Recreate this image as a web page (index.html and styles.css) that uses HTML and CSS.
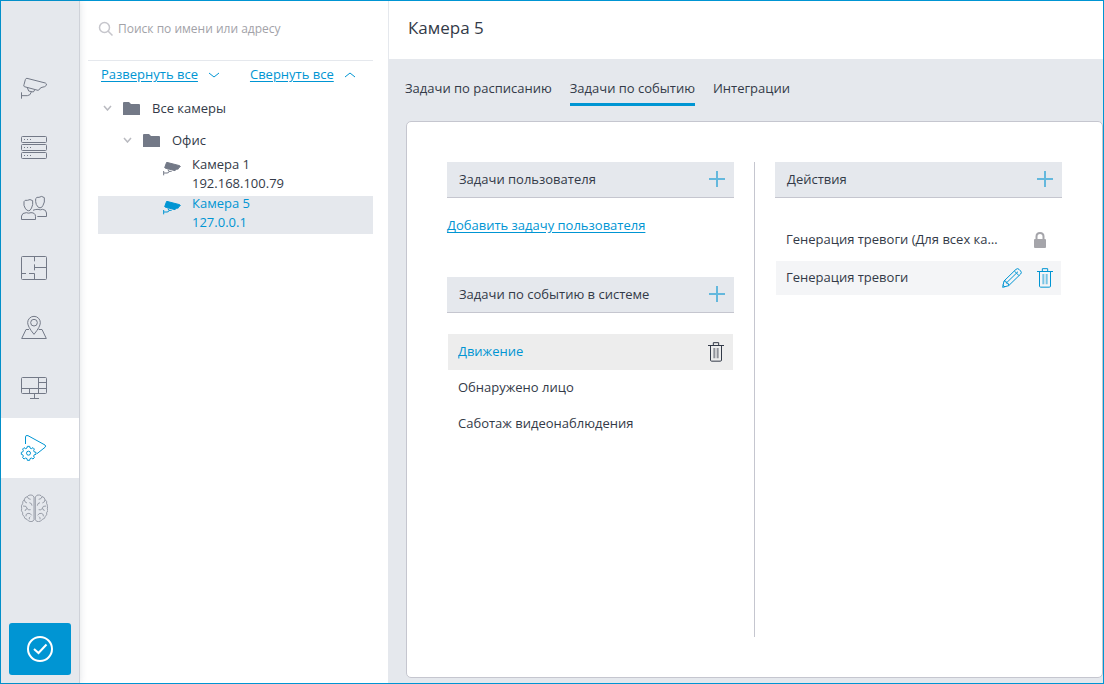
FILE: index.html
```html
<!DOCTYPE html>
<html lang="ru">
<head>
<meta charset="utf-8">
<meta name="viewport" content="width=device-width, initial-scale=1">
<title>Камера 5</title>
<link rel="stylesheet" href="styles.css">
</head>
<body>
<div class="app">
  <nav class="rail" aria-label="Разделы">
    <div class="rail-items">
      <button class="rail-item" aria-label="Камеры"><svg class="rail-icon" viewBox="60 42 84 84"><path d="M81 55 L136 69 Q141 71 139 76 L134 80 L126 82 L121 84 L119 88 L114 91 L73 80 Q70 79 72 74 L76 59 Q78 54 81 55Z M82 83 L86 93 L100 96 L104 90 M94 96 Q91 107 82 107 L65 107 M64.500 97 V116"/></svg></button>
      <button class="rail-item" aria-label="Серверы"><svg class="rail-icon" viewBox="60 222 84 84"><rect x="64.500" y="229.500" width="75" height="18" rx="3"/><rect x="64.500" y="253.500" width="75" height="18" rx="3"/><rect x="64.500" y="277.500" width="75" height="18" rx="3"/><path stroke-dasharray="3 6" d="M72 238.500 H96 M72 262.500 H96 M72 286.500 H96"/></svg></button>
      <button class="rail-item" aria-label="Пользователи"><svg class="rail-icon" viewBox="60 42 84 84"><path d="M72 65 Q74 59 82 61 Q90 56 98 62 L98 74 Q95 86 90 91 Q85 94 80 90 Q75 86 72 76Z M107 56 Q110 50 117 52 Q125 46 133 53 L133 66 Q129 78 125 82 Q120 85 115 82 Q107 74 107 65Z M64.500 118.500 V108 Q66 98 79 98 Q86 101 93 98 Q106 98 106.500 109 V118.500Z M99 91 Q105 88 114 88 Q121 91 128 88 Q139 89 139.500 99 V109.500 H112"/></svg></button>
      <button class="rail-item" aria-label="Планы"><svg class="rail-icon" viewBox="60 222 84 84"><rect x="64.500" y="229.500" width="75" height="69" rx="3"/><path d="M103.500 229 V244 M103.500 253 V271 M103.500 262.500 H139 M64 280.500 H78 M87 280.500 H103.500 V298"/></svg></button>
      <button class="rail-item" aria-label="Карта"><svg class="rail-icon" viewBox="60 42 84 84"><path d="M102 103 Q83 80 83 68 A19 19 0 0 1 121 68 Q121 80 102 103Z M87 88.500 H78 L65 115.500 H139 L126 88.500 H116"/><circle cx="102" cy="68" r="10"/></svg></button>
      <button class="rail-item" aria-label="Экраны"><svg class="rail-icon" viewBox="60 222 84 84"><rect x="64.500" y="232.500" width="75" height="48" rx="3"/><path d="M64 265.500 H139 M115.500 232 V280 M115.500 247.500 H139 M88.500 265 V280 M103.500 280 V295 M90 295.500 H117"/></svg></button>
      <button class="rail-item rail-item-active" aria-label="Сценарии" aria-current="page"><svg class="rail-icon" viewBox="60 72 84 84"><path d="M76.500 102 V81 Q77 74 84 77 L135 105 Q139 108 135 112 L111 131"/><circle cx="85.500" cy="129.500" r="6"/><path d="M82 109 h7 l1 5 4 2 5-3 4 4 -2 5 2 4 5 1 v6 l-5 1 -2 4 2 5 -4 4 -5-3 -4 2 -1 5 h-7 l-1-5 -4-2 -5 3 -4-4 2-5 -2-4 -4-1 v-6 l4-1 2-4 -2-5 4-4 5 3 4-2Z"/></svg></button>
      <button class="rail-item" aria-label="Аналитика"><svg class="rail-icon" viewBox="60 252 84 84"><path class="thin" d="M102 261 Q98 253 90 255 Q84 256 82 260 Q74 261 73 269 Q67 273 68 281 Q62 287 65 295 Q62 303 68 308 Q66 315 72 319 Q73 327 81 328 Q85 335 93 335 Q100 335 102 329Z M106 261 Q110 253 118 255 Q124 256 126 260 Q134 261 135 269 Q142 273 140 281 Q146 287 142 295 Q146 303 140 308 Q142 315 136 319 Q135 327 127 328 Q123 335 115 335 Q108 335 106 329Z M82 260 Q84 268 92 268 M73 269 Q73 277 81 279 M88 278 Q96 279 96 287 M69 288 Q80 286 82 296 Q84 302 92 299 M82 296 Q76 297 75 303 M78 319 Q76 312 84 310 Q92 309 95 316 M88 328 Q86 323 91 320 M126 260 Q124 268 116 268 M135 269 Q135 277 127 279 M120 278 Q112 279 112 287 M139 288 Q128 286 126 296 Q124 302 116 299 M126 296 Q132 297 133 303 M130 319 Q132 312 124 310 Q116 309 113 316 M120 328 Q122 323 117 320"/></svg></button>
    </div>
    <button class="apply" aria-label="Применить"><svg class="apply-icon" viewBox="0 0 28 28"><circle cx="14" cy="14" r="12"/><path d="M8 14 L12.500 18 L20.500 9.500"/></svg></button>
  </nav>

  <aside class="side">
    <label class="search">
      <svg class="search-icon" viewBox="0 0 16 16"><circle cx="6.500" cy="6.500" r="5"/><path d="M10 10 L14.500 14.500"/></svg>
      <input class="search-input" type="text" placeholder="Поиск по имени или адресу" aria-label="Поиск по имени или адресу">
    </label>
    <div class="fold">
      <div class="fold-group"><a class="link" href="#expand">Развернуть все</a><svg class="fold-icon" viewBox="0 0 12 8"><path d="M1 2 L6 6 L11 2"/></svg></div>
      <div class="fold-group"><a class="link" href="#collapse">Свернуть все</a><svg class="fold-icon" viewBox="0 0 12 8"><path d="M1 6 L6 2 L11 6"/></svg></div>
    </div>
    <ul class="tree">
      <li>
        <button class="node"><svg class="caret" viewBox="0 0 9 6"><path d="M1 1 L4.500 5 L8 1"/></svg><svg class="folder" viewBox="0 0 17 13"><path d="M0 1 Q0 0 1 0 H6 L8 2 H16 Q17 2 17 3 V13 H0Z"/></svg><span>Все камеры</span></button>
        <ul class="branch">
          <li>
            <button class="node"><svg class="caret" viewBox="0 0 9 6"><path d="M1 1 L4.500 5 L8 1"/></svg><svg class="folder" viewBox="0 0 17 13"><path d="M0 1 Q0 0 1 0 H6 L8 2 H16 Q17 2 17 3 V13 H0Z"/></svg><span>Офис</span></button>
            <ul class="cameras">
              <li><button class="camera"><svg class="cam-icon" viewBox="0 0 54 42"><path class="solid" d="M11 1 L50 11 Q54 13 50 16 L46 17 V21 L40 22 L36 26 L6 18 Q4 17 6 14Z"/><path class="arm" d="M15 22 L17 28 L26 28 M20 28 Q17 33 12 33 H3 M2 27 V40"/></svg><span class="camera-text">Камера 1<br>192.168.100.79</span></button></li>
              <li><button class="camera camera-active"><svg class="cam-icon" viewBox="0 0 54 42"><path class="solid" d="M11 1 L50 11 Q54 13 50 16 L46 17 V21 L40 22 L36 26 L6 18 Q4 17 6 14Z"/><path class="arm" d="M15 22 L17 28 L26 28 M20 28 Q17 33 12 33 H3 M2 27 V40"/></svg><span class="camera-text">Камера 5<br>127.0.0.1</span></button></li>
            </ul>
          </li>
        </ul>
      </li>
    </ul>
  </aside>

  <main class="main">
    <header class="head"><h1 class="title">Камера 5</h1></header>
    <div class="tabs" role="tablist">
      <button class="tab" role="tab">Задачи по расписанию</button>
      <button class="tab tab-active" role="tab" aria-selected="true">Задачи по событию</button>
      <button class="tab" role="tab">Интеграции</button>
    </div>
    <div class="card">
      <div class="column">
        <section class="user-tasks">
          <div class="bar"><h2 class="bar-title">Задачи пользователя</h2><button class="icon-button" aria-label="Добавить задачу"><svg class="plus" viewBox="0 0 16 16"><path d="M0 8 H16 M8 0 V16"/></svg></button></div>
          <a class="link add-link" href="#add">Добавить задачу пользователя</a>
        </section>
        <section>
          <div class="bar"><h2 class="bar-title">Задачи по событию в системе</h2><button class="icon-button" aria-label="Добавить событие"><svg class="plus" viewBox="0 0 16 16"><path d="M0 8 H16 M8 0 V16"/></svg></button></div>
          <ul class="events">
            <li class="event event-active"><button class="row-name">Движение</button><button class="icon-button" aria-label="Удалить"><svg class="trash" viewBox="0 0 48 60"><path d="M0 10.500 H48 M16 10 V2 H32 V10 M7.500 11 V55 Q8 57.500 11 57.500 H37 Q40.500 57.500 40.500 54 V11"/><path class="bars" d="M19 18 V49 M29 18 V49"/></svg></button></li>
            <li class="event"><button class="row-name">Обнаружено лицо</button></li>
            <li class="event"><button class="row-name">Саботаж видеонаблюдения</button></li>
          </ul>
        </section>
      </div>
      <section class="column column-right">
        <div class="bar"><h2 class="bar-title">Действия</h2><button class="icon-button" aria-label="Добавить действие"><svg class="plus" viewBox="0 0 16 16"><path d="M0 8 H16 M8 0 V16"/></svg></button></div>
        <ul class="actions">
          <li class="action"><button class="row-name">Генерация тревоги (Для всех камер)</button><span class="lock-slot"><svg class="lock" viewBox="0 0 12 16"><rect class="lock-body" y="7" width="12" height="9" rx="1"/><path d="M2.500 8 V4.500 Q2.500 1 6 1 Q9.500 1 9.500 4.500 V8"/></svg></span></li>
          <li class="action action-active"><button class="row-name">Генерация тревоги</button><button class="icon-button" aria-label="Изменить"><svg class="pencil" viewBox="0 0 60 60"><path d="M2 58 L6 39 L42 4 Q47 0 51 4 L56 9 Q60 14 56 18 L20 53Z M6 39 Q14 37 13 45 Q21 44 20 53 M13 45 L48 11 M37 9 L51 23 M2 51 L9 57"/></svg></button><button class="icon-button" aria-label="Удалить"><svg class="trash trash-blue" viewBox="0 0 48 60"><path d="M0 10.500 H48 M16 10 V2 H32 V10 M7.500 11 V55 Q8 57.500 11 57.500 H37 Q40.500 57.500 40.500 54 V11"/><path class="bars" d="M19 18 V49 M29 18 V49"/></svg></button></li>
        </ul>
      </section>
    </div>
  </main>
</div>
</body>
</html>
```
FILE: styles.css
```css
:root {
  --blue: #0095d3;
  --gray: #e5e8ed;
  --text: #333a48;
  --line: #c5c6cf;
  --icon: #737987;
}

* {
  box-sizing: border-box;
}

body {
  margin: 0;
  color: var(--text);
  font: 13px/19px "Open Sans", "Noto Sans", sans-serif;
}

button {
  padding: 0;
  border: 0;
  background: none;
  color: inherit;
  font: inherit;
  text-align: left;
  cursor: pointer;
}

ul {
  margin: 0;
  padding: 0;
  list-style: none;
}

h1,
h2 {
  margin: 0;
  font-weight: 400;
}

svg {
  display: block;
  flex: none;
  fill: none;
  stroke: currentColor;
}

.app {
  display: flex;
  min-height: 100vh;
  border: 1px solid var(--blue);
}

.rail {
  display: flex;
  flex: none;
  flex-direction: column;
  justify-content: space-between;
  width: 79px;
  padding: 57px 0 8px;
  border-right: 1px solid #cfd2d9;
  background: var(--gray);
  box-shadow: 0 0 7px rgba(50, 60, 90, 0.15);
}

.rail-item {
  display: flex;
  align-items: center;
  width: 100%;
  height: 60px;
  padding-left: 19px;
  color: var(--icon);
}

.rail-item-active {
  background: #fff;
  color: var(--blue);
}

.rail-icon {
  width: 28px;
  height: 28px;
  stroke-width: 3;
}

.thin {
  stroke-width: 2;
}

.apply {
  display: flex;
  align-items: center;
  justify-content: center;
  height: 52px;
  margin: 0 8px;
  border-radius: 3px;
  background: var(--blue);
  color: #fff;
}

.apply-icon {
  width: 28px;
  height: 28px;
  stroke-width: 2;
}

.side {
  flex: none;
  width: 309px;
  padding: 0 15px 0 8px;
  border-right: 1px solid var(--gray);
}

.search {
  display: flex;
  align-items: center;
  gap: 4px;
  height: 60px;
  padding: 0 10px 4px;
  border-bottom: 1px solid var(--gray);
}

.search-icon {
  width: 16px;
  height: 16px;
  color: #c6c6cc;
  stroke-width: 1.5;
}

.search-input {
  flex: 1;
  min-width: 0;
  padding: 0;
  border: 0;
  outline: 0;
  background: none;
  color: var(--text);
  font: 12px/19px "Open Sans", "Noto Sans", sans-serif;
}

.search-input::placeholder {
  color: #a2a2a8;
}

.fold {
  display: flex;
  gap: 30px;
  padding: 4px 13px 0;
}

.fold-group {
  display: flex;
  align-items: center;
  gap: 10px;
}

.fold-icon {
  width: 12px;
  height: 8px;
  color: var(--blue);
}

.link {
  color: var(--blue);
  text-underline-offset: 2px;
}

.tree {
  padding-top: 8px;
}

.node {
  display: flex;
  align-items: center;
  width: 100%;
  height: 32px;
  padding-left: 15px;
}

.branch .node {
  padding-left: 35px;
}

.caret {
  width: 9px;
  height: 6px;
  margin-right: 11px;
  color: #b9bac0;
  stroke-width: 1.5;
}

.folder {
  width: 17px;
  height: 13px;
  margin-right: 12px;
  color: var(--icon);
  fill: currentColor;
  stroke: none;
}

.cameras {
  display: grid;
  gap: 1px;
  padding: 1px 0 0 10px;
}

.camera {
  display: flex;
  gap: 11px;
  width: 100%;
  height: 38px;
  padding-left: 65px;
}

.camera-active {
  background: var(--gray);
  color: var(--blue);
}

.cam-icon {
  width: 18px;
  height: 14px;
  margin-top: 5px;
  color: var(--icon);
  stroke-width: 3;
}

.camera-text {
  margin-top: -2px;
}

.camera-active .cam-icon {
  color: var(--blue);
}

.solid {
  fill: currentColor;
}

.main {
  display: flex;
  flex: 1;
  flex-direction: column;
  min-width: 0;
  padding-bottom: 5px;
  background: var(--gray);
}

.head {
  height: 58px;
  padding: 14px 19px;
  background: #fff;
}

.title {
  font-size: 17px;
  line-height: 26px;
}

.tabs {
  display: flex;
  gap: 18px;
  padding: 20px 16px 15px;
}

.tab {
  height: 27px;
  padding-bottom: 5px;
  border-bottom: 3px solid transparent;
}

.tab-active {
  border-color: var(--blue);
}

.card {
  display: flex;
  flex: 1;
  gap: 20px;
  margin-left: 17px;
  padding: 40px;
  border: 1px solid var(--line);
  border-radius: 5px;
  background: #fff;
}

.column {
  flex: 1;
  min-width: 0;
}

.column-right {
  flex: 1 1 21px;
  padding-left: 20px;
  border-left: 1px solid var(--line);
}

.user-tasks {
  height: 115px;
}

.bar {
  display: flex;
  align-items: center;
  justify-content: space-between;
  height: 36px;
  padding: 0 9px 0 12px;
  border-bottom: 1px solid var(--line);
  background: var(--gray);
}

.bar-title {
  font-size: 13px;
  line-height: 19px;
}

.icon-button {
  flex: none;
}

.bar .icon-button {
  padding-bottom: 2px;
}

.plus {
  width: 16px;
  height: 16px;
  color: #64b8dd;
  stroke-width: 2;
}

.add-link {
  display: inline-block;
  margin-top: 18px;
}

.events {
  padding: 21px 1px 0;
}

.event {
  display: flex;
  align-items: center;
  height: 36px;
  padding: 0 9px 0 10px;
}

.event-active {
  background: #ededed;
}

.event-active .row-name {
  color: var(--blue);
}

.row-name {
  flex: 1;
  min-width: 0;
  padding-bottom: 2px;
  overflow: hidden;
  text-overflow: ellipsis;
  white-space: nowrap;
}

.actions {
  display: grid;
  grid-template-columns: minmax(0, 1fr);
  gap: 4px;
  padding: 25px 1px 0;
}

.action {
  display: flex;
  align-items: center;
  gap: 15px;
  height: 34px;
  padding: 0 8px 0 10px;
}

.action-active {
  background: #f4f5f7;
}

.trash {
  width: 16px;
  height: 20px;
  stroke-width: 3;
}

.bars {
  stroke-width: 6;
  opacity: 0.5;
}

.trash-blue,
.pencil {
  color: var(--blue);
}

.pencil {
  width: 20px;
  height: 20px;
  stroke-width: 3;
}

.lock-slot {
  padding: 0 7px 0 17px;
}

.lock {
  width: 12px;
  height: 16px;
  color: #a5a5aa;
  stroke-width: 2;
}

.lock-body {
  fill: currentColor;
  stroke: none;
}
```
